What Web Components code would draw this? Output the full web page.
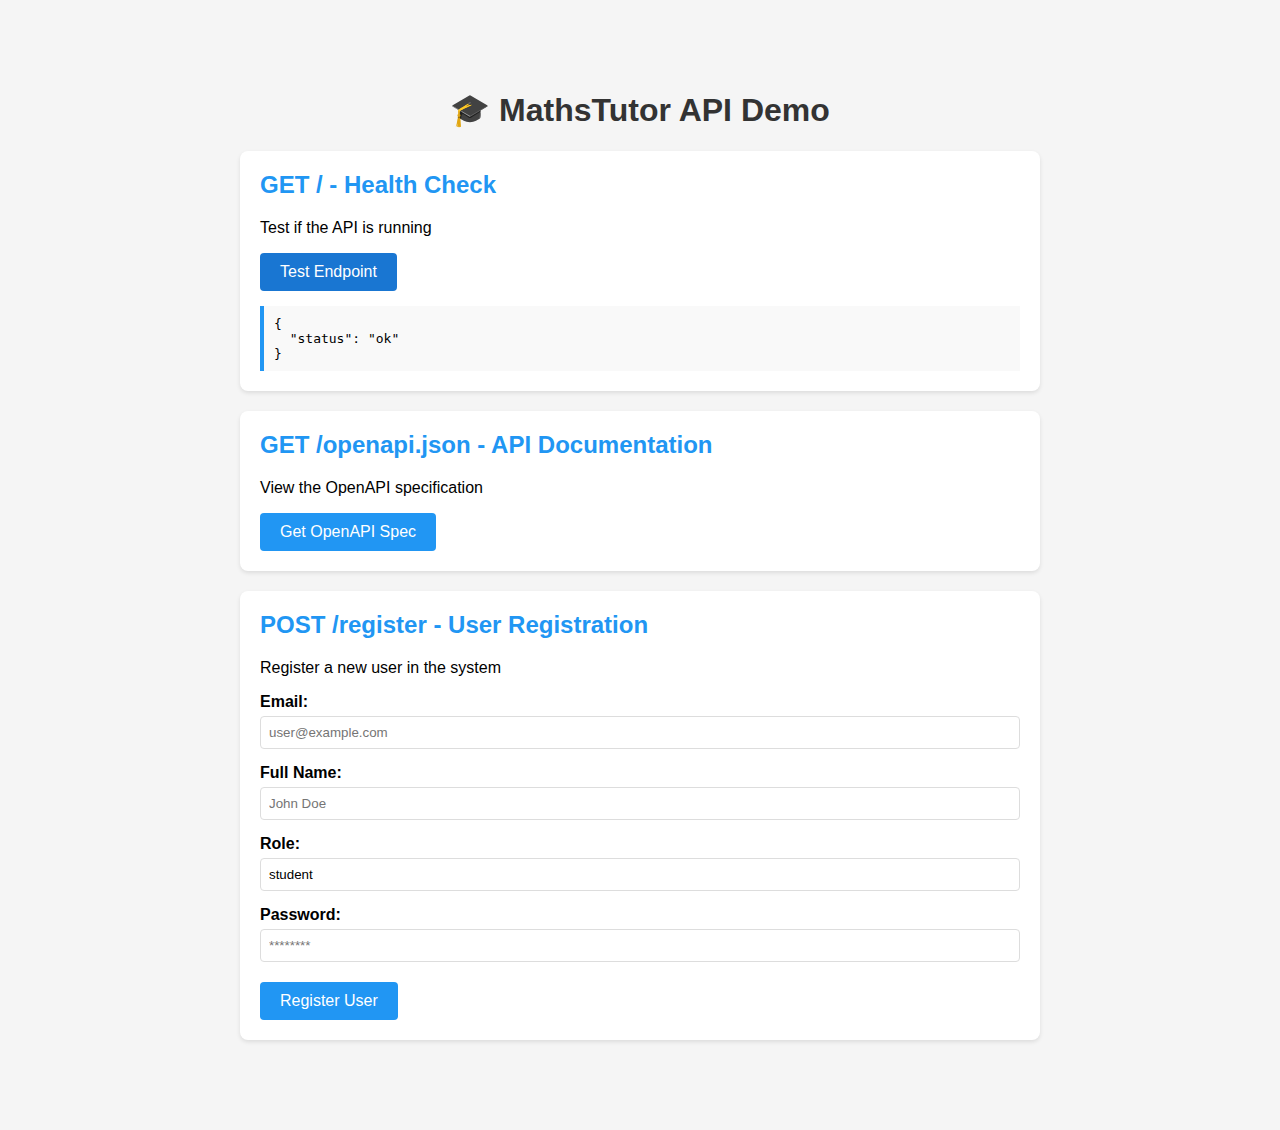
<!DOCTYPE html>
<html lang="en">
<head>
<meta charset="utf-8">
<meta name="viewport" content="width=device-width, initial-scale=1">
<title>MathsTutor API Demo</title>
<style>
  body {
    margin: 0;
    background: #f5f5f5;
    color: #000;
    font-family: "Liberation Sans", Arial, sans-serif;
    font-size: 16px;
    line-height: 18px;
  }
</style>
</head>
<body>
<demo-page heading="🎓 MathsTutor API Demo">
  <endpoint-card heading="GET / - Health Check" description="Test if the API is running">
    <action-button active>Test Endpoint</action-button>
    <response-box></response-box>
  </endpoint-card>
  <endpoint-card heading="GET /openapi.json - API Documentation" description="View the OpenAPI specification">
    <action-button>Get OpenAPI Spec</action-button>
  </endpoint-card>
  <endpoint-card heading="POST /register - User Registration" description="Register a new user in the system">
    <form-field label="Email:" type="email" placeholder="user@example.com"></form-field>
    <form-field label="Full Name:" type="text" placeholder="John Doe"></form-field>
    <form-field label="Role:" type="text" value="student"></form-field>
    <form-field label="Password:" type="password" placeholder="********"></form-field>
    <action-button spaced>Register User</action-button>
  </endpoint-card>
</demo-page>

<script>
class BaseElement extends HTMLElement {
  constructor() {
    super();
    this.attachShadow({ mode: "open" }).innerHTML = this.constructor.markup;
  }
  part$(selector) {
    return this.shadowRoot.querySelector(selector);
  }
}

class DemoPage extends BaseElement {
  static markup = `
    <style>
      :host { display: block; max-width: 800px; margin: 0 auto; padding: 92px 20px 90px; }
      h1 { margin: 0 0 22px; color: #333; font-size: 32px; line-height: 37px; text-align: center; }
      main { display: flex; flex-direction: column; gap: 20px; }
    </style>
    <h1></h1>
    <main><slot></slot></main>`;
  connectedCallback() {
    this.part$("h1").textContent = this.getAttribute("heading");
  }
}

class EndpointCard extends BaseElement {
  static markup = `
    <style>
      :host { display: block; padding: 20px; background: #fff; border-radius: 8px; box-shadow: 0 2px 4px rgba(0, 0, 0, .1); }
      h2 { margin: 0 0 20px; color: #2196f3; font-size: 24px; line-height: 28px; }
      p { margin: 0 0 16px; }
      .content { display: flex; flex-direction: column; align-items: stretch; gap: 15px; }
    </style>
    <h2></h2>
    <p></p>
    <div class="content"><slot></slot></div>`;
  connectedCallback() {
    this.part$("h2").textContent = this.getAttribute("heading");
    this.part$("p").textContent = this.getAttribute("description");
  }
}

class ActionButton extends BaseElement {
  static markup = `
    <style>
      :host { display: block; }
      :host([spaced]) { padding-top: 5px; }
      button {
        display: block; padding: 10px 20px; border: 0; border-radius: 4px;
        background: #2196f3; color: #fff; font-family: inherit; font-size: 16px; line-height: 18px; cursor: pointer;
      }
      button:hover, :host([active]) button { background: #1976d2; }
    </style>
    <button type="button"><slot></slot></button>`;
}

class ResponseBox extends BaseElement {
  static markup = `
    <style>
      :host { display: block; }
      pre {
        margin: 0; padding: 10px; border-left: 4px solid #2196f3; background: #f9f9f9;
        font-family: "DejaVu Sans Mono", monospace; font-size: 13px; line-height: 15px; white-space: pre-wrap;
      }
    </style>
    <pre></pre>`;
  connectedCallback() {
    this.part$("pre").textContent = JSON.stringify({ status: "ok" }, null, 2);
  }
}

class FormField extends BaseElement {
  static markup = `
    <style>
      :host { display: flex; flex-direction: column; gap: 5px; }
      label { font-weight: bold; }
      input {
        box-sizing: border-box; width: 100%; margin: 0; padding: 8px;
        border: 1px solid #ddd; border-radius: 4px; background: #fff; color: #000; font-family: inherit;
      }
    </style>
    <label for="control"></label>
    <input id="control">`;
  connectedCallback() {
    this.part$("label").textContent = this.getAttribute("label");
    const input = this.part$("input");
    input.type = this.getAttribute("type") || "text";
    input.placeholder = this.getAttribute("placeholder") || "";
    input.value = this.getAttribute("value") || "";
  }
}

customElements.define("demo-page", DemoPage);
customElements.define("endpoint-card", EndpointCard);
customElements.define("action-button", ActionButton);
customElements.define("response-box", ResponseBox);
customElements.define("form-field", FormField);
</script>
</body>
</html>
